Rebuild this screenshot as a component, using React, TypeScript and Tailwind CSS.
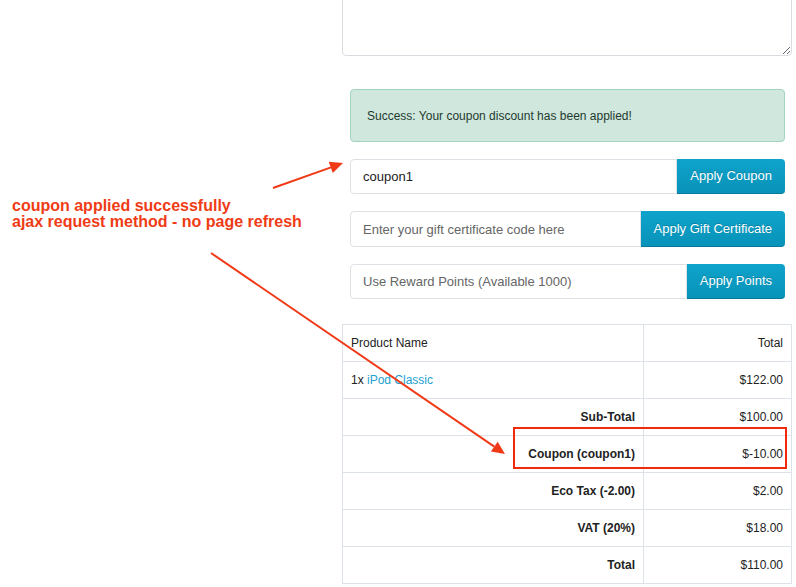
import { useState } from "react";

const rows = [
  { label: "Sub-Total", value: "$100.00" },
  { label: "Coupon (coupon1)", value: "$-10.00" },
  { label: "Eco Tax (-2.00)", value: "$2.00" },
  { label: "VAT (20%)", value: "$18.00" },
  { label: "Total", value: "$110.00" },
];

function InputGroup({
  value,
  placeholder,
  button,
  height,
}: {
  value?: string;
  placeholder: string;
  button: string;
  height: string;
}) {
  const [text, setText] = useState(value ?? "");
  return (
    <div className={`flex ${height}`}>
      <input
        className="flex-1 min-w-0 h-full px-3 text-[13px] text-[#222] placeholder:text-[#666] border border-[#dde1e6] rounded-l-[4px] outline-none"
        placeholder={placeholder}
        value={text}
        onChange={(e) => setText(e.target.value)}
      />
      <button
        type="button"
        className="h-full px-[13px] text-[13px] text-white whitespace-nowrap rounded-r-[4px] bg-gradient-to-b from-[#0fa3cb] to-[#0893b9] border-b border-[#06799a] [text-shadow:0_-1px_0_rgba(0,0,0,0.2)]"
      >
        {button}
      </button>
    </div>
  );
}

export default function App() {
  return (
    <div className="relative w-[796px] h-[587px] overflow-hidden bg-white font-['Liberation_Sans',Arial,sans-serif]">
      <div className="flex">
        <div className="w-[342px] pl-3 pt-[198px] text-[16px] leading-[16px] font-bold text-[#ef3c16]">
          <p>coupon applied successfully</p>
          <p>ajax request method - no page refresh</p>
        </div>

        <div className="w-[450px] flex flex-col">
          <textarea className="block -mt-[30px] h-[86px] w-full border border-[#d9dde2] rounded-[4px] outline-none" />

          <div className="ml-2 mr-[7px] flex flex-col">
            <div className="mt-[33px] h-[53px] flex items-center pl-4 text-[12px] text-[#1f3a30] bg-[#cfe7dc] border border-[#a3d5be] rounded-[4px]">
              Success: Your coupon discount has been applied!
            </div>
            <div className="mt-[17px]">
              <InputGroup value="coupon1" placeholder="Enter your coupon here" button="Apply Coupon" height="h-[35px]" />
            </div>
            <div className="mt-[17px]">
              <InputGroup placeholder="Enter your gift certificate code here" button="Apply Gift Certificate" height="h-[36px]" />
            </div>
            <div className="mt-[17px]">
              <InputGroup placeholder="Use Reward Points (Available 1000)" button="Apply Points" height="h-[35px]" />
            </div>
          </div>

          <div className="mt-[25px] border-t border-l border-r border-[#dde2e8] text-[12px] text-[#222]">
            <div className="grid grid-cols-[301px_1fr] h-[37px] border-b border-[#dde2e8]">
              <div className="flex items-center px-2 border-r border-[#dde2e8]">Product Name</div>
              <div className="flex items-center justify-end px-2">Total</div>
            </div>
            <div className="grid grid-cols-[301px_1fr] h-[37px] border-b border-[#dde2e8]">
              <div className="flex items-center px-2 border-r border-[#dde2e8]">
                1x&nbsp;<a className="text-[#23a1d1]">iPod Classic</a>
              </div>
              <div className="flex items-center justify-end px-2">$122.00</div>
            </div>
            {rows.map((row) => (
              <div key={row.label} className="grid grid-cols-[301px_1fr] h-[37px] border-b border-[#dde2e8]">
                <div className="flex items-center justify-end px-2 font-bold border-r border-[#dde2e8]">{row.label}</div>
                <div className="flex items-center justify-end px-2">{row.value}</div>
              </div>
            ))}
          </div>
        </div>
      </div>

      {/* annotation overlay */}
      <div className="absolute left-[513px] top-[427px] w-[274px] h-[42px] border-2 border-[#f02a0a] pointer-events-none" />
      <svg className="absolute inset-0 pointer-events-none" width="796" height="587">
        <line x1="273" y1="188" x2="331" y2="167.4" stroke="#f03a17" strokeWidth="2" />
        <polygon points="343,163 332.8,173 328.7,161.7" fill="#f03a17" />
        <line x1="211" y1="253" x2="494.3" y2="446.7" stroke="#f03a17" strokeWidth="2" />
        <polygon points="505,454 490.9,451.6 497.7,441.7" fill="#f03a17" />
      </svg>
    </div>
  );
}
